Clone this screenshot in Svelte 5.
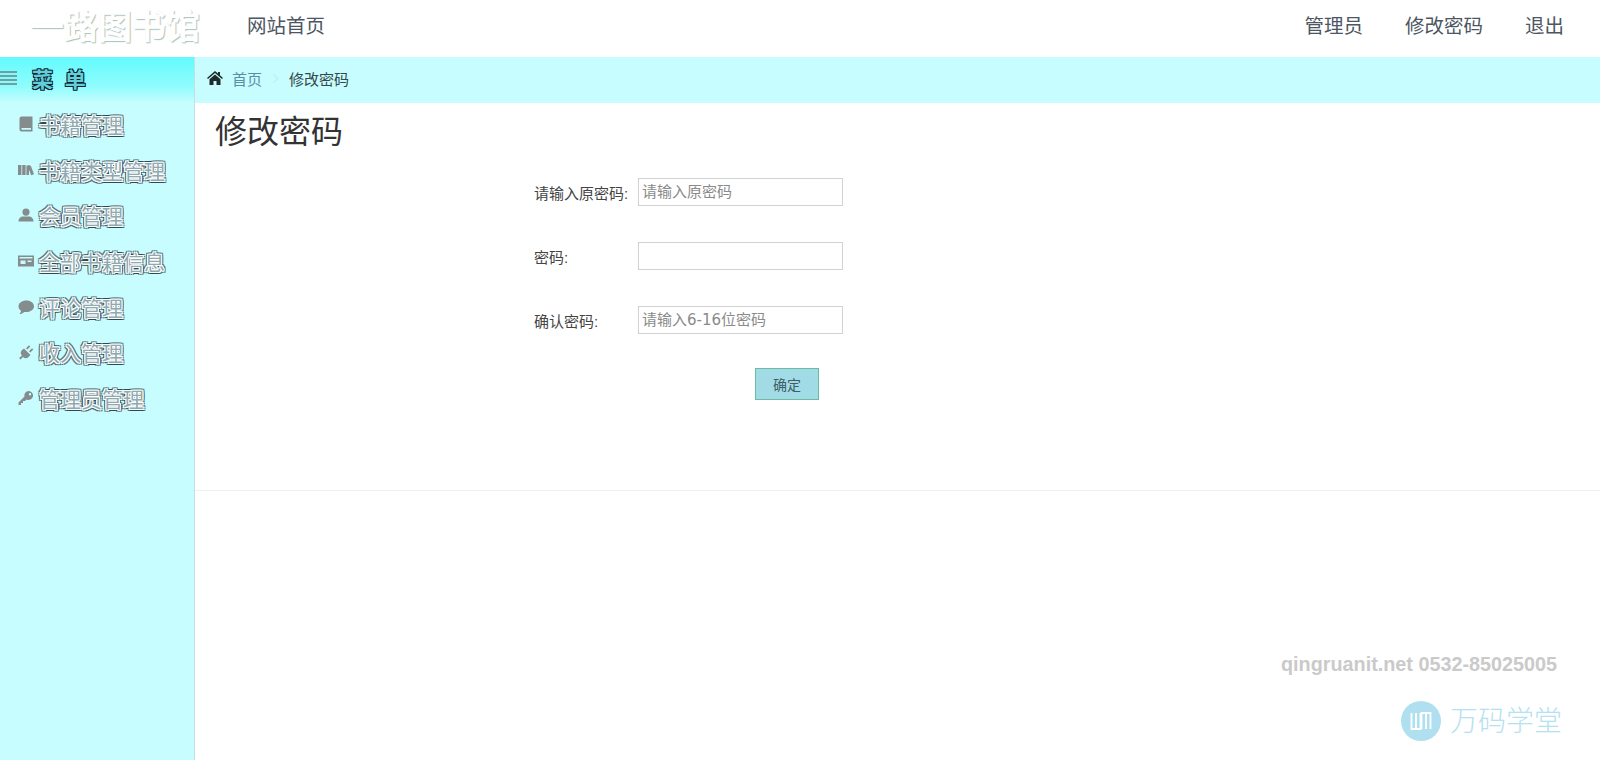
<script lang="ts">
  /** Change-password page of the library admin: top bar, side menu, breadcrumb and form. */
  const menu = [
    { label: '书籍管理', icon: 'book' },
    { label: '书籍类型管理', icon: 'books' },
    { label: '会员管理', icon: 'user' },
    { label: '全部书籍信息', icon: 'card' },
    { label: '评论管理', icon: 'chat' },
    { label: '收入管理', icon: 'plug' },
    { label: '管理员管理', icon: 'key' }
  ];

  const fields = [
    { label: '请输入原密码:', placeholder: '请输入原密码' },
    { label: '密码:', placeholder: '' },
    { label: '确认密码:', placeholder: '请输入6-16位密码' }
  ];

  const actions = ['管理员', '修改密码', '退出'];
</script>

<div class="page">
  <header class="topbar">
    <div class="logo">一路图书馆</div>
    <a class="nav-link home-link" href="#home">网站首页</a>
    <nav class="actions">
      {#each actions as action}
        <a class="nav-link" href="#action">{action}</a>
      {/each}
    </nav>
  </header>

  <div class="body">
    <aside class="sidebar">
      <div class="menu-head">
        <span class="bars"><i></i><i></i><i></i><i></i></span>
        <span class="menu-title">菜 单</span>
      </div>
      <ul class="menu">
        {#each menu as item}
          <li class="menu-item">
            <svg class="menu-icon" viewBox="0 0 16 16" aria-hidden="true">
              {#if item.icon === 'book'}
                <path d="M1.500 2.500A2 2 0 0 1 3.500.5H14.500v15H3.500a2 2 0 0 1-2-2zM3.500 12v1.800h9.500V12z" fill-rule="evenodd" />
              {:else if item.icon === 'books'}
                <path d="M0 3h3.400v10H0zM4.200 3h3.400v10H4.200zM8.400 3.800l2.800-.8 1.800 1.300 3 8-2.800.9-2.200-5.500V13H8.400z" />
              {:else if item.icon === 'user'}
                <path d="M8 1.500a3.600 3.600 0 1 1 0 7.200A3.600 3.600 0 0 1 8 1.500zM.5 14.500c0-3.300 2.500-5 4.500-5h6c2 0 4.500 1.700 4.500 5z" />
              {:else if item.icon === 'card'}
                <path d="M0 2.500h16v11H0zM1.500 4v1.500h13V4zM2.500 7.500V11h5V7.500zM9.500 7.500V9h4V7.500z" fill-rule="evenodd" />
              {:else if item.icon === 'chat'}
                <path d="M8.500 1.500c4.200 0 7.500 2.600 7.500 5.800s-3.300 5.800-7.500 5.800c-.8 0-1.500-.1-2.200-.2C5 14 3.200 14.900 1.500 15c.8-.9 1.400-2 1.500-3.300C1.400 10.700.5 9.100.500 7.300c0-3.200 3.400-5.800 8-5.800z" />
              {:else if item.icon === 'plug'}
                <path d="M6 4.500l6.500 6.500-2 2a4 4 0 0 1-5.500 0L2.500 15.500 1 14l3-2.500a4 4 0 0 1 0-5.500zM8 4.200l3-3 1.300 1.300-3 3zM11 7.200l3-3 1.300 1.300-3 3z" />
              {:else}
                <path d="M10.500 1a4.500 4.500 0 1 1-2 8.500L7 11H5v2H3v2H.500v-2.500l6-6A4.500 4.500 0 0 1 10.500 1zM12 3a1.200 1.200 0 1 0 0 2.400A1.200 1.200 0 0 0 12 3z" fill-rule="evenodd" />
              {/if}
            </svg>
            <span class="menu-label">{item.label}</span>
          </li>
        {/each}
      </ul>
    </aside>

    <main class="content">
      <div class="breadcrumb">
        <svg class="home-icon" viewBox="0 0 16 14" aria-hidden="true">
          <path d="M8 0l3 2.600V1h2v3.300L16 7l-1 1.100L8 2 1 8.100 0 7zM8 3.500l5.500 4.800V14H9.500v-4h-3v4h-4V8.300z" />
        </svg>
        <a class="crumb-link" href="#home">首页</a>
        <svg class="crumb-sep" viewBox="0 0 8 12" aria-hidden="true">
          <path d="M1.500 1l5 5-5 5" />
        </svg>
        <span class="crumb-current">修改密码</span>
      </div>

      <section class="panel">
        <h1 class="title">修改密码</h1>
        <form class="form">
          {#each fields as field}
            <div class="row">
              <label class="label" for={field.label}>{field.label}</label>
              <input class="input" id={field.label} type="text" placeholder={field.placeholder} />
            </div>
          {/each}
          <div class="submit-row">
            <button class="submit" type="button">确定</button>
          </div>
        </form>
      </section>

      <div class="watermark">
        <div class="wm-contact">qingruanit.net 0532-85025005</div>
        <div class="wm-brand">
          <svg class="wm-logo" viewBox="0 0 40 40" aria-hidden="true">
            <circle cx="20" cy="20" r="20" fill="#b0e0f0" />
            <path d="M10.500 12V28H19.500V12M15 12V28M20.500 28V12H29.500V28M25 12V28" fill="none" stroke="#fff" stroke-width="1.800" />
          </svg>
          <span class="wm-name">万码学堂</span>
        </div>
      </div>
    </main>
  </div>
</div>

<style>
  :global(body) {
    margin: 0;
    background: #fff;
  }

  .page {
    width: 1600px;
    height: 760px;
    display: flex;
    flex-direction: column;
    overflow: hidden;
    font-family: 'Liberation Sans', 'Noto Sans CJK SC', sans-serif;
    color: #333;
  }

  .topbar {
    height: 57px;
    flex-shrink: 0;
    display: flex;
    align-items: center;
    background: #fff;
    padding-bottom: 9px;
    box-sizing: border-box;
  }

  .logo {
    width: 247px;
    padding-left: 30px;
    box-sizing: border-box;
    font-size: 34px;
    font-weight: 700;
    color: #fff;
    white-space: nowrap;
    text-shadow: 1px 1px 1px #a6c2bd;
  }

  .nav-link {
    font-size: 19.500px;
    color: #4d5662;
    text-decoration: none;
  }

  .actions {
    margin-left: auto;
    display: flex;
    gap: 42px;
    padding-right: 36px;
  }

  .body {
    flex: 1;
    display: flex;
    min-height: 0;
  }

  .sidebar {
    width: 195px;
    flex-shrink: 0;
    background: #c7fdfe;
    border-right: 1px solid #c6dfe2;
    box-sizing: border-box;
  }

  .menu-head {
    height: 46px;
    display: flex;
    align-items: center;
    padding-bottom: 4px;
    box-sizing: border-box;
    background: linear-gradient(to bottom, #62fbfd, #90fcfd 65%, #c7fdfe);
  }

  .bars {
    width: 17px;
    display: flex;
    flex-direction: column;
    gap: 2px;
    margin-right: 15px;
  }

  .bars i {
    display: block;
    height: 2px;
    background: #6f9f9f;
  }

  .menu-title {
    font-size: 21px;
    font-weight: 700;
    letter-spacing: 3px;
    white-space: pre;
    color: #5fd0d8;
    text-shadow: 1px 1px 0 #123, -1px -1px 0 #123, 1px -1px 0 #123, -1px 1px 0 #123;
  }

  .menu {
    list-style: none;
    margin: 0;
    padding: 0;
  }

  .menu-item {
    height: 45.700px;
    display: flex;
    align-items: center;
    padding-left: 18px;
    padding-bottom: 4px;
    box-sizing: border-box;
  }

  .menu-icon {
    width: 16px;
    height: 16px;
    flex-shrink: 0;
    fill: #858c8e;
    margin-right: 5px;
  }

  .menu-label {
    font-size: 21px;
    font-weight: 400;
    color: #8fa9b0;
    white-space: nowrap;
    text-shadow:
      1px 0 0 #fff, -1px 0 0 #fff, 0 1px 0 #fff, 0 -1px 0 #fff,
      1px 1px 0 #f4ffff, -1px -1px 0 #f4ffff, 1px -1px 0 #f4ffff, -1px 1px 0 #f4ffff,
      2px 0 0 #2b4a54, -2px 0 0 #2b4a54, 0 2px 0 #2b4a54, 0 -2px 0 #2b4a54,
      2px 2px 0 #5b7a82, -2px -2px 0 #5b7a82, 2px -2px 0 #5b7a82, -2px 2px 0 #5b7a82;
  }

  .content {
    position: relative;
    flex: 1;
    min-width: 0;
  }

  .breadcrumb {
    height: 46px;
    display: flex;
    align-items: center;
    padding-left: 12px;
    padding-bottom: 4px;
    box-sizing: border-box;
    background: #c7fdfe;
    font-size: 15px;
  }

  .home-icon {
    width: 16px;
    height: 14px;
    fill: #1f2a2a;
    margin-right: 9px;
  }

  .crumb-link {
    color: #5a8ea3;
    text-decoration: none;
  }

  .crumb-sep {
    width: 7px;
    height: 11px;
    margin: 0 10px;
    fill: none;
    stroke: #b4e2e6;
    stroke-width: 1;
  }

  .crumb-current {
    color: #33484a;
  }

  .panel {
    height: 388px;
    box-sizing: border-box;
    border-bottom: 1px solid #eef1f1;
  }

  .title {
    margin: 0;
    padding: 6px 0 0 20px;
    font-size: 32px;
    line-height: 46px;
    font-weight: 400;
    color: #333;
  }

  .form {
    margin: 23px 0 0 339px;
    width: 320px;
  }

  .row {
    display: flex;
    align-items: center;
    height: 28px;
    margin-bottom: 36px;
  }

  .label {
    width: 104px;
    flex-shrink: 0;
    font-size: 15px;
    color: #444;
  }

  .input {
    width: 205px;
    height: 28px;
    box-sizing: border-box;
    border: 1px solid #d2d2d2;
    padding: 0 3px;
    font-size: 15px;
    font-family: 'DejaVu Sans', 'Noto Sans CJK SC', sans-serif;
    outline: none;
  }

  .input::placeholder {
    color: #8a8a8a;
  }

  .submit-row {
    display: flex;
    margin: -2px 0 0 221px;
  }

  .submit {
    width: 64px;
    height: 32px;
    border: 1px solid #6dbba5;
    background: #a1dce6;
    color: #3f5d64;
    font-size: 14px;
    font-family: inherit;
    padding: 0;
  }

  .watermark {
    position: absolute;
    right: 43px;
    top: 595px;
    display: flex;
    flex-direction: column;
    align-items: flex-end;
  }

  .wm-contact {
    font-size: 19.800px;
    font-weight: 700;
    color: #cacaca;
    line-height: 24px;
  }

  .wm-brand {
    display: flex;
    align-items: center;
    gap: 9px;
    margin-top: 23px;
    margin-right: -5px;
  }

  .wm-logo {
    width: 40px;
    height: 40px;
  }

  .wm-name {
    font-size: 28px;
    font-weight: 300;
    color: #b5e2f1;
    line-height: 40px;
    padding-top: 3px;
  }
</style>
